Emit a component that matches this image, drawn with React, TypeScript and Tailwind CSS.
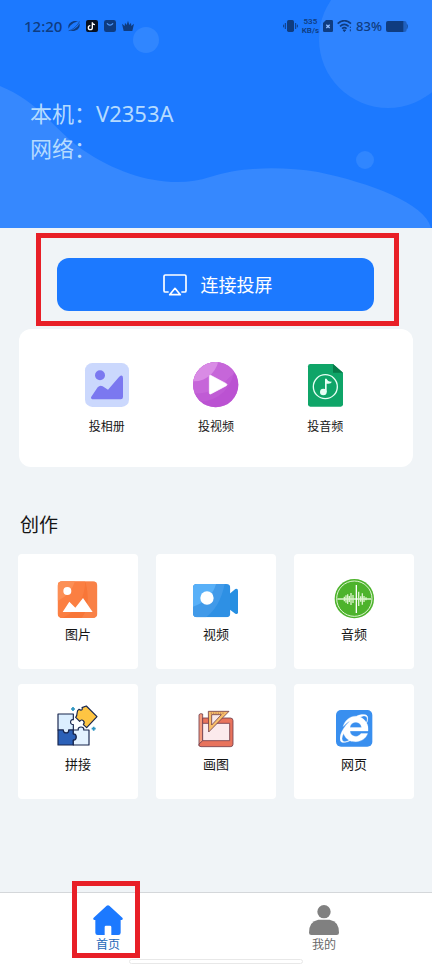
import type { ReactNode } from 'react';
import { FaInternetExplorer } from 'react-icons/fa';

type Entry = {
  label: string;
  icon: ReactNode;
};

const AlbumIcon = () => (
  <svg viewBox="69 63 144 144" className="w-12 h-12">
    <rect x="75" y="69" width="132" height="132" rx="22" fill="#cbd8fd" />
    <circle cx="120" cy="106" r="15" fill="#7b78f0" />
    <path
      d="M93 172L113 142Q120 134 128 139L144 149L177 111Q189 101 189 115V171Q189 178 182 178H97Q92 177 93 172Z"
      fill="#7b78f0"
    />
  </svg>
);

const CastVideoIcon = () => (
  <svg viewBox="396 63 144 144" className="w-12 h-12">
    <defs>
      <clipPath id="cast-video">
        <circle cx="467" cy="134" r="68" />
      </clipPath>
    </defs>
    <g clipPath="url(#cast-video)">
      <rect x="396" y="63" width="144" height="144" fill="#bd55d3" />
      <circle cx="418" cy="80" r="105" fill="#c666d9" />
      <circle cx="402" cy="50" r="74" fill="#d98be5" />
      <path d="M399 160Q460 165 510 110L540 90V207H430Z" fill="#b94fd2" opacity=".5" />
    </g>
    <path
      d="M452 106L499 131Q503 134 499 137L452 162Q448 163 448 158V110Q448 105 452 106Z"
      fill="#fff"
      stroke="#fff"
      strokeWidth="2"
    />
  </svg>
);

const CastAudioIcon = () => (
  <svg viewBox="183 63 144 144" className="w-12 h-12">
    <path d="M211 72H279L309 98V193Q309 200 302 200H211Q204 200 204 193V79Q204 72 211 72Z" fill="#0fa568" />
    <path d="M279 72L309 98H279Z" fill="#087a49" />
    <circle cx="256" cy="140" r="36" fill="none" stroke="#e9fff5" strokeWidth="4" />
    <circle cx="250" cy="156" r="10" fill="#e9fff5" />
    <path d="M255 116H260Q263 126 276 125Q273 133 260 131V157H255Z" fill="#e9fff5" />
  </svg>
);

const PictureIcon = () => (
  <svg viewBox="162 222 144 144" className="w-12 h-12">
    <defs>
      <clipPath id="picture">
        <rect x="173" y="244" width="119" height="110" rx="13" />
      </clipPath>
    </defs>
    <g clipPath="url(#picture)">
      <rect x="173" y="244" width="119" height="110" fill="#f87638" />
      <path d="M173 244H256Q252 325 187 354H173Z" fill="#fb7f42" />
      <path d="M173 244H225Q213 284 173 303Z" fill="#fc8f55" />
      <path d="M256 244H292V354H245Q275 315 256 244Z" fill="#fa8950" opacity=".6" />
    </g>
    <circle cx="202" cy="273" r="12" fill="#fff" />
    <path d="M188 336L208 305L226 323L249 294L278 336Z" fill="#fff" />
  </svg>
);

const VideoIcon = () => (
  <svg viewBox="576 222 144 144" className="w-12 h-12">
    <defs>
      <clipPath id="camera">
        <rect x="579" y="252" width="112" height="100" rx="12" />
      </clipPath>
    </defs>
    <path d="M688 282L706 267Q714 265 714 272V337Q714 344 706 341L688 328Z" fill="#268fe2" />
    <g clipPath="url(#camera)">
      <rect x="579" y="252" width="112" height="100" fill="#2e90e4" />
      <path d="M579 252H674Q660 320 618 352H579Z" fill="#419ae9" />
      <path d="M579 252H648Q635 300 579 320Z" fill="#58b0f8" />
    </g>
    <circle cx="621" cy="294" r="20" fill="#fff" />
  </svg>
);

const AudioIcon = () => (
  <svg viewBox="342 102 144 144" className="w-12 h-12">
    <circle cx="415" cy="176" r="59" fill="#4db32c" />
    <circle cx="415" cy="176" r="53" fill="none" stroke="#dff5d2" strokeWidth="3" />
    <path
      d="M364 177H466M385 170V184M390 166V188M395 163V192M400 168V186M405 159V195M411 165V189M428 155V198M434 169V185M439 160V194M444 168V186M450 172V181"
      stroke="#d9f3cb"
      strokeWidth="4"
    />
    <path d="M421 135V219" stroke="#fff" strokeWidth="4" />
  </svg>
);

const PuzzleIcon = () => (
  <svg viewBox="162 72 144 144" className="w-12 h-12">
    <g stroke="#17244d" strokeWidth="3.5" strokeLinejoin="round">
      <path
        d="M174 102H220V119C211 116 207 134 220 134V150H206C209 162 188 162 190 150H174Z"
        fill="#dbeeff"
      />
      <path
        d="M174 150H190C188 162 209 162 206 150H220V162C232 160 232 182 220 180V195H174Z"
        fill="#2c61b8"
      />
      <path
        d="M220 150H235C231 138 255 138 251 150H267V195H220V180C232 182 232 160 220 162Z"
        fill="#e4f2ff"
      />
      <path
        d="M259 78L291 110L260 143L250 134C257 125 246 114 239 124L227 112C236 101 226 94 237 88C245 94 249 88 246 83Z"
        fill="#fec543"
      />
    </g>
    <path
      d="M219 81V93M213 87H225M281 140V152M275 146H287"
      stroke="#2c94c1"
      strokeWidth="5"
    />
  </svg>
);

const DrawIcon = () => (
  <svg viewBox="126 72 144 144" className="w-12 h-12">
    <g stroke="#713d4a" strokeWidth="2.5" strokeLinejoin="round">
      <path d="M147 104Q151 99 158 102V184L147 196Z" fill="#f49a7d" />
      <path d="M158 114H241Q249 114 249 122V193Q249 200 241 200H153Q145 200 147 192L158 182Z" fill="#e8735c" />
      <path d="M158 130H239V182H158Z" fill="#fbeaec" />
      <path d="M175 94H237L176 156Z" fill="#f8bd69" />
      <path d="M185 104H214L185 135Z" fill="#f8e8e8" />
    </g>
    <path d="M184 98V101M191 98V101M198 98V101M205 98V101M212 98V101M219 98V101" stroke="#713d4a" strokeWidth="2" />
  </svg>
);

const WebIcon = () => (
  <svg viewBox="540 72 144 144" className="w-12 h-12">
    <rect x="558" y="90" width="109" height="110" rx="15" fill="#398fef" />
    <FaInternetExplorer x="570" y="103" size={85} color="#fff" strokeWidth={6} />
  </svg>
);

const casts: Entry[] = [
  { label: '投相册', icon: <AlbumIcon /> },
  { label: '投视频', icon: <CastVideoIcon /> },
  { label: '投音频', icon: <CastAudioIcon /> },
];

const tools: Entry[] = [
  { label: '图片', icon: <PictureIcon /> },
  { label: '视频', icon: <VideoIcon /> },
  { label: '音频', icon: <AudioIcon /> },
  { label: '拼接', icon: <PuzzleIcon /> },
  { label: '画图', icon: <DrawIcon /> },
  { label: '网页', icon: <WebIcon /> },
];

const StatusBar = () => (
  <div className="relative flex items-center justify-between h-9 pt-4 px-6 text-[#0f3c80]">
    <div className="flex items-center gap-1.5">
      <span className="text-[15px] leading-5 font-medium">12:20</span>
      <svg viewBox="0 0 36 36" className="w-3 h-3" fill="currentColor">
        <path d="M2 26C-4 10 16 -2 31 5C20 5 6 13 2 26Z" />
        <path d="M34 10C40 26 20 38 5 31C16 31 30 23 34 10Z" />
        <path d="M2 32C12 32 32 14 34 4" fill="none" stroke="currentColor" strokeWidth="2" />
      </svg>
      <svg viewBox="0 0 36 36" className="w-3 h-3">
        <rect width="36" height="36" rx="6" fill="#07101f" />
        <path d="M19 7V23A6 6 0 1 1 13 17M19 8Q21 14 27 14" fill="none" stroke="#fff" strokeWidth="4" />
      </svg>
      <svg viewBox="0 0 36 36" className="w-3 h-3">
        <rect width="36" height="36" rx="7" fill="currentColor" />
        <path d="M9 10Q18 21 27 10" fill="none" stroke="#4f9bff" strokeWidth="4" />
      </svg>
      <svg viewBox="0 0 36 36" className="w-3 h-3" fill="currentColor">
        <path d="M0 11L8 18L9 8L14 15L18 2L22 15L27 8L28 18L36 11L31 33H5Z" />
      </svg>
    </div>
    <div className="flex items-center gap-1">
      <svg viewBox="0 0 45 36" className="w-[15px] h-3">
        <rect x="12" width="21" height="36" rx="5" fill="currentColor" />
        <path d="M7 9V27M2 14V22M38 9V27M43 14V22" stroke="currentColor" strokeWidth="3" />
      </svg>
      <span className="flex flex-col items-center text-[8px] leading-[9px] font-semibold font-['Roboto',sans-serif]">
        <span>535</span>
        <span>KB/s</span>
      </span>
      <svg viewBox="0 0 30 36" className="w-2.5 h-3">
        <path d="M9 0H26Q30 0 30 4V32Q30 36 26 36H4Q0 36 0 32V9Z" fill="currentColor" />
        <path d="M10 14L20 24M20 14L10 24" stroke="#8fbcff" strokeWidth="4" />
      </svg>
      <svg viewBox="0 0 45 36" className="w-[15px] h-3" fill="none" stroke="currentColor" strokeWidth="5">
        <path d="M2 11Q22 -7 42 11M9 19Q22 7 35 19M15 26Q22 20 29 26" />
        <path d="M18 30H26L22 35ZM40 20V24M40 28V34" fill="currentColor" strokeWidth="3" />
      </svg>
      <span className="text-[13px] leading-5 font-medium">83%</span>
      <svg viewBox="0 0 66 33" className="w-[22px] h-[11px]">
        <rect width="62" height="33" rx="7" fill="currentColor" opacity=".5" />
        <path d="M7 0H52V33H7Q0 33 0 26V7Q0 0 7 0Z" fill="currentColor" />
        <path d="M63 10Q66 16 63 23Z" fill="currentColor" stroke="currentColor" />
      </svg>
    </div>
  </div>
);

const Header = () => (
  <header className="relative h-57 bg-[#1c79ff]">
    <svg
      viewBox="0 0 432 228"
      preserveAspectRatio="none"
      className="absolute inset-0 w-full h-full"
      fill="#3688fe"
    >
      <path d="M0 86C40 102 54 130 83 150C122 177 172 190 210 177C240 167 280 166 318 172C370 183 425 203 431 228H0Z" />
      <circle cx="388" cy="39" r="69" fill="#2f84ff" />
      <circle cx="146" cy="40" r="13" fill="#3086ff" />
      <circle cx="365" cy="160" r="9" fill="#3086ff" />
    </svg>
    <StatusBar />
    <div className="relative mt-15 pl-[30px] text-[22px] leading-[35px] text-[#b5dbff]">
      <p>本机：V2353A</p>
      <p>网络：</p>
    </div>
  </header>
);

const TabBar = () => (
  <nav className="relative grid grid-cols-2 h-18 mt-auto border-t border-[#d4d7da] bg-white text-[12px] leading-4">
    <a href="#home" className="relative flex flex-col items-center pt-3 text-[#2468b8]">
      <svg viewBox="0 0 90 90" className="w-[30px] h-[30px] fill-[#1c79ff]">
        <path d="M41 2Q45 -1 49 2L88 38Q92 43 86 45H83V83Q83 90 76 90H55V66Q55 62 51 62H39Q35 62 35 66V90H14Q7 90 7 83V45H4Q-2 43 2 38Z" />
      </svg>
      <span className="mt-0.5">首页</span>
      <span className="absolute -top-3 left-1/3 w-17 h-[77px] border-5 border-[#e81f27]" />
    </a>
    <a href="#mine" className="flex flex-col items-center pt-3 text-[#686868]">
      <svg viewBox="0 0 90 90" className="w-[30px] h-[30px] fill-[#808080]">
        <circle cx="45" cy="20" r="20" />
        <path d="M28 44H62Q90 49 90 83Q90 90 83 90H7Q0 90 0 83Q0 49 28 44Z" />
      </svg>
      <span className="mt-0.5">我的</span>
    </a>
    <span className="absolute bottom-0 left-1/2 w-[174px] h-[5px] -translate-x-1/2 rounded-sm border border-[#e8e8e8] bg-white" />
  </nav>
);

const App = () => {
  return (
    <div className="flex flex-col min-h-screen bg-[#f0f4f7] text-[#151515] font-['Noto_Sans','Noto_Sans_CJK_SC',sans-serif]">
      <Header />
      <main>
        <div className="mt-[5px] ml-9 mr-[33px] border-5 border-[#e81f27] pt-5 pb-2.5 pl-4 pr-5">
          <button
            type="button"
            className="flex items-center justify-center gap-3.5 w-full h-[53px] pl-1 rounded-xl bg-[#1c79ff] text-white text-[18px] leading-6"
          >
            <svg viewBox="0 0 72 66" className="w-6 h-[22px]" fill="none" stroke="currentColor" strokeWidth="5" strokeLinejoin="round">
              <path d="M17 54H7Q3 54 3 50V7Q3 3 7 3H65Q69 3 69 7V50Q69 54 65 54H55" />
              <path d="M36 43L52 62H20Z" />
            </svg>
            连接投屏
          </button>
        </div>
        <section className="grid grid-cols-3 mt-[3px] mx-[19px] px-[33px] pt-8 pb-[30px] rounded-xl bg-white">
          {casts.map(({ label, icon }) => (
            <button key={label} type="button" className="flex flex-col items-center gap-2 text-[12px] leading-5">
              {icon}
              <span>{label}</span>
            </button>
          ))}
        </section>
        <h2 className="mt-11 ml-5 text-[19px] leading-7">创作</h2>
        <section className="grid grid-cols-3 gap-x-[18px] gap-y-[15px] mt-[15px] mx-[18px] mb-6">
          {tools.map(({ label, icon }) => (
            <button
              key={label}
              type="button"
              className="flex flex-col items-center gap-0.5 pt-5 pb-[25px] rounded-sm bg-white text-[13px] leading-5"
            >
              {icon}
              <span>{label}</span>
            </button>
          ))}
        </section>
      </main>
      <TabBar />
    </div>
  );
};

export default App;
